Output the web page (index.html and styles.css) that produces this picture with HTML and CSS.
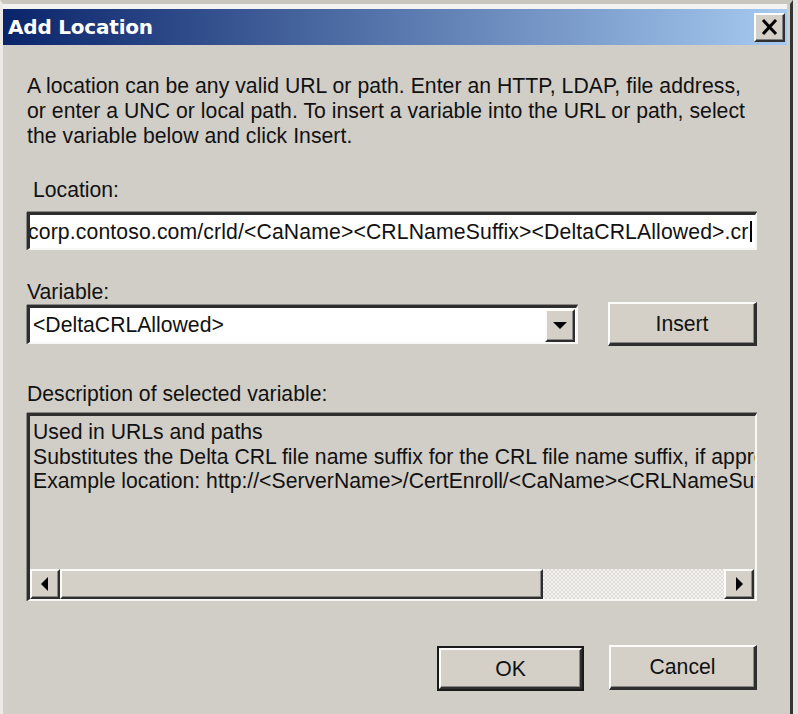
FILE: index.html
```html
<!DOCTYPE html>
<html>
<head>
<meta charset="utf-8">
<title>Add Location</title>
<link rel="stylesheet" href="styles.css">
</head>
<body>
<div class="window">
  <div class="titlebar">
    <span class="title">Add Location</span>
    <span class="close"><svg width="17" height="16" viewBox="0 0 17 16"><path d="M2 1 L15 15 M15 1 L2 15" stroke="#000" stroke-width="3" fill="none"/></svg></span>
  </div>
  <div class="content">
    <p class="intro">A location can be any valid URL or path. Enter an HTTP, LDAP, file address,<br>or enter a UNC or local path. To insert a variable into the URL or path, select<br>the variable below and click Insert.</p>
    <div class="label loc-label">Location:</div>
    <div class="sunken textbox"><span class="tb-text">corp.contoso.com/crld/&lt;CaName&gt;&lt;CRLNameSuffix&gt;&lt;DeltaCRLAllowed&gt;.cr</span><span class="caret"></span></div>
    <div class="label var-label">Variable:</div>
    <div class="varrow">
      <div class="sunken combo">
        <span class="combo-text">&lt;DeltaCRLAllowed&gt;</span>
        <span class="raised dropbtn"><svg width="14" height="8" viewBox="0 0 14 8"><path d="M0 0 H14 L7 7 Z" fill="#000"/></svg></span>
      </div>
      <div class="raised btn insert">Insert</div>
    </div>
    <div class="label desc-label">Description of selected variable:</div>
    <div class="sunken descbox">
      <div class="desctext">Used in URLs and paths<br>Substitutes the Delta CRL file name suffix for the CRL file name suffix, if appropriate<br>Example location: http://&lt;ServerName&gt;/CertEnroll/&lt;CaName&gt;&lt;CRLNameSuffix&gt;&lt;DeltaCRLAllowed&gt;.crl</div>
      <div class="hscroll">
        <span class="raised sbtn"><svg width="8" height="14" viewBox="0 0 8 14"><path d="M7 0 V14 L0 7 Z" fill="#000"/></svg></span>
        <span class="raised thumb"></span>
        <span class="track"></span>
        <span class="raised sbtn"><svg width="8" height="14" viewBox="0 0 8 14"><path d="M1 0 V14 L8 7 Z" fill="#000"/></svg></span>
      </div>
    </div>
    <div class="actions">
      <div class="default"><div class="raised btn ok">OK</div></div>
      <div class="raised btn cancel">Cancel</div>
    </div>
  </div>
</div>
</body>
</html>
```
FILE: styles.css
```css
html, body {
  margin: 0;
  padding: 0;
}
body {
  background: #e6e4e0;
  font-family: "Liberation Sans", Arial, sans-serif;
  color: #111;
}
.window {
  width: 793px;
  height: 714px;
  box-sizing: border-box;
  background: #d1cec8;
  border-top: 4px solid #c9c6c0;
  border-left: 3px solid #eceae6;
  border-right: 3px solid #353535;
  overflow: hidden;
}
.titlebar {
  height: 36px;
  border-top: 5px solid #f3f3f1;
  margin-right: 3px;
  background: linear-gradient(to right, #0a246a 0%, #a6caf0 100%);
  display: flex;
  align-items: center;
  justify-content: space-between;
  padding: 0 2px 0 5px;
}
.title {
  color: #fff;
  font-family: "DejaVu Sans", sans-serif;
  font-weight: bold;
  font-size: 20px;
  letter-spacing: -0.2px;
}
.close {
  width: 31px;
  height: 29px;
  box-sizing: border-box;
  background: #d4d0c8;
  border-top: 2px solid #fff;
  border-left: 2px solid #fff;
  border-right: 2px solid #303030;
  border-bottom: 2px solid #303030;
  box-shadow: inset -1px -1px #808080;
  display: flex;
  align-items: center;
  justify-content: center;
}
.content {
  padding: 0 33px 0 24px;
  font-size: 21.2px;
}
.intro {
  margin: 28px 0 0;
  line-height: 25px;
  white-space: nowrap;
  letter-spacing: 0.04px;
}
.label {
  line-height: 20px;
  height: 20px;
  white-space: nowrap;
}
.loc-label {
  margin-top: 32px;
  padding-left: 6px;
}
.var-label {
  margin-top: 32px;
}
.desc-label {
  margin-top: 38px;
}
.sunken {
  box-sizing: border-box;
  border-top: 3px solid #2e2e2e;
  border-left: 3px solid #2e2e2e;
  border-right: 2px solid #f7f7f5;
  border-bottom: 2px solid #f7f7f5;
  box-shadow: 0 -1px #8a8884, -1px 0 #8a8884;
}
.raised {
  box-sizing: border-box;
  background: #d4d0c8;
  border-top: 2px solid #fbfbfa;
  border-left: 2px solid #fbfbfa;
  border-right: 2px solid #2e2e2e;
  border-bottom: 2px solid #2e2e2e;
  box-shadow: inset -1px -1px #8a8884;
}
.textbox {
  margin-top: 12px;
  height: 38px;
  background: #fff;
  display: flex;
  align-items: center;
  overflow: hidden;
  white-space: nowrap;
  padding-left: 0;
}
.tb-text {
  margin-left: -2px;
  letter-spacing: 0.13px;
}
.caret {
  display: inline-block;
  flex: none;
  width: 2px;
  height: 21px;
  background: #000;
  margin-left: 1px;
}
.varrow {
  display: flex;
  align-items: flex-start;
  justify-content: space-between;
}
.combo {
  margin-top: 3px;
  width: 551px;
  height: 39px;
  background: #fff;
  display: flex;
  align-items: stretch;
  justify-content: space-between;
  padding-left: 3px;
}
.combo-text {
  display: flex;
  align-items: center;
  white-space: nowrap;
}
.dropbtn {
  width: 30px;
  margin: 1px 1px 0 0;
  display: flex;
  align-items: center;
  justify-content: center;
}
.btn {
  display: flex;
  align-items: center;
  justify-content: center;
}
.insert {
  width: 149px;
  height: 44px;
  border-right-width: 3px;
  border-bottom-width: 3px;
}
.descbox {
  margin-top: 9px;
  height: 188px;
  background: #d1cec8;
  display: flex;
  flex-direction: column;
  overflow: hidden;
}
.desctext {
  flex: 1;
  padding: 4px 0 0 3px;
  line-height: 24.5px;
  white-space: nowrap;
  overflow: hidden;
}
.hscroll {
  height: 30px;
  display: flex;
  margin-right: 1px;
}
.sbtn {
  width: 30px;
  flex: none;
  display: flex;
  align-items: center;
  justify-content: center;
}
.thumb {
  width: 483px;
  flex: none;
}
.track {
  flex: 1;
  background-color: #efedea;
  background-image: repeating-conic-gradient(#e0ddd8 0 25%, #f4f3f0 0 50%);
  background-size: 4px 4px;
}
.actions {
  margin-top: 44px;
  display: flex;
  justify-content: flex-end;
  align-items: flex-start;
  gap: 25px;
}
.default {
  margin-top: 1px;
  width: 147px;
  height: 45px;
  box-sizing: border-box;
  border: 2px solid #1a1a1a;
}
.ok {
  width: 100%;
  height: 100%;
}
.cancel {
  width: 148px;
  height: 45px;
  border-right-width: 3px;
  border-bottom-width: 3px;
}
```
